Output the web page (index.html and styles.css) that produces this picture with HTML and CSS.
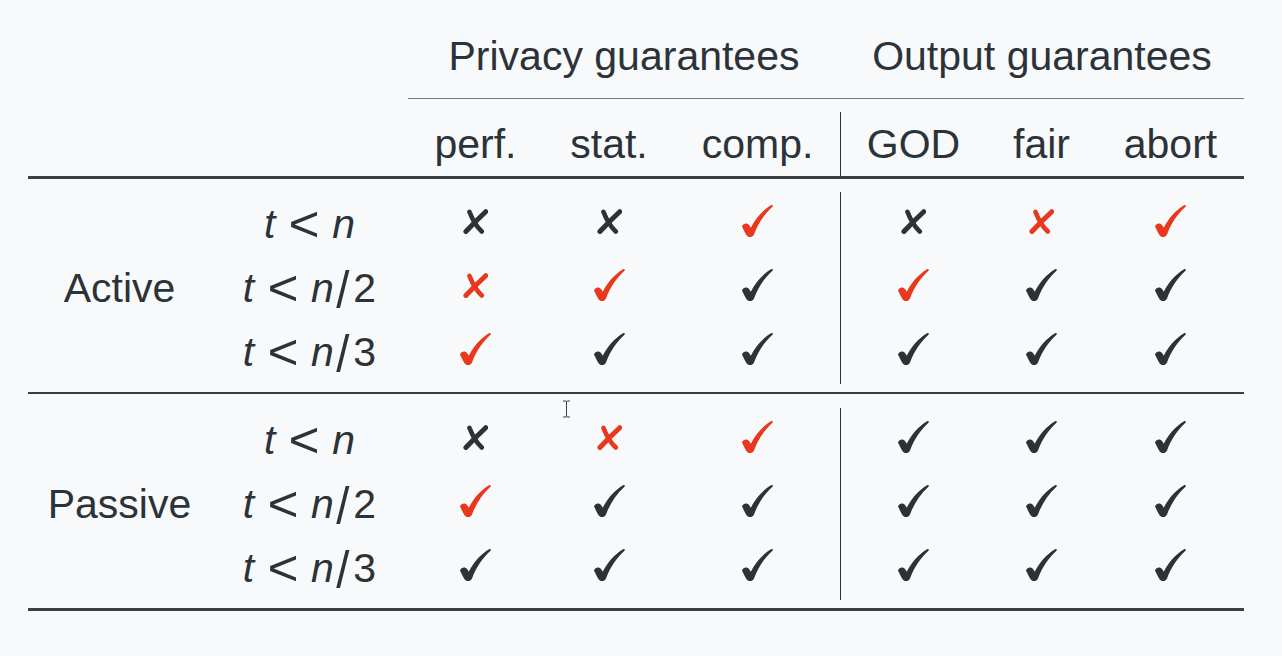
FILE: index.html
```html
<!DOCTYPE html>
<html>
<head>
<meta charset="utf-8">
<link rel="stylesheet" href="styles.css">
</head>
<body>
<svg class="defs" width="0" height="0" aria-hidden="true">
  <defs>
    <symbol id="chk" viewBox="0 0 30 31">
      <path d="M0,20.5 C1.5,17.5 5,17 7,19.5 L8.5,22 C13,13 20,5 28.5,0 C29.5,-0.3 30.3,0.8 29.5,1.6 C22,8.5 16,17 12,27.5 C11,30.5 8.5,31.5 6.5,31 C5,30.6 4,29 3,27 C2,25 0.8,22.5 0,20.5 Z" fill="currentColor"/>
    </symbol>
    <symbol id="crs" viewBox="0 0 24 24">
      <path d="M21.8,2.6 C16,8 8,16 2.8,21.6" fill="none" stroke="currentColor" stroke-width="4.8" stroke-linecap="round"/>
      <path d="M6.2,2.8 C9,10 13,17 18,21.6" fill="none" stroke="currentColor" stroke-width="4.4" stroke-linecap="round"/>
    </symbol>
  </defs>
</svg>
<div class="slide">
  <div class="tbl">
    <div class="grid head1">
      <div class="grp priv">Privacy guarantees</div>
      <div class="grp out">Output guarantees</div>
    </div>
    <div class="cmid"></div>
    <div class="grid head2">
      <div class="cell"></div>
      <div class="cell"></div>
      <div class="cell">perf.</div>
      <div class="cell">stat.</div>
      <div class="cell">comp.</div>
      <div class="cell vsep">GOD</div>
      <div class="cell">fair</div>
      <div class="cell">abort</div>
    </div>
    <div class="rule heavy"></div>

    <div class="grid block">
      <div class="cell"></div>
      <div class="cell m"><i>t</i><span class="lt">&lt;</span><i>n</i></div>
      <div class="cell ic"><svg class="x"><use href="#crs"/></svg></div>
      <div class="cell ic"><svg class="x"><use href="#crs"/></svg></div>
      <div class="cell ic red"><svg class="c"><use href="#chk"/></svg></div>
      <div class="cell ic vsep"><svg class="x"><use href="#crs"/></svg></div>
      <div class="cell ic red"><svg class="x"><use href="#crs"/></svg></div>
      <div class="cell ic red"><svg class="c"><use href="#chk"/></svg></div>

      <div class="cell">Active</div>
      <div class="cell m"><i>t</i><span class="lt">&lt;</span><i>n</i><span class="sl">/</span>2</div>
      <div class="cell ic red"><svg class="x"><use href="#crs"/></svg></div>
      <div class="cell ic red"><svg class="c"><use href="#chk"/></svg></div>
      <div class="cell ic"><svg class="c"><use href="#chk"/></svg></div>
      <div class="cell ic vsep red"><svg class="c"><use href="#chk"/></svg></div>
      <div class="cell ic"><svg class="c"><use href="#chk"/></svg></div>
      <div class="cell ic"><svg class="c"><use href="#chk"/></svg></div>

      <div class="cell"></div>
      <div class="cell m"><i>t</i><span class="lt">&lt;</span><i>n</i><span class="sl">/</span>3</div>
      <div class="cell ic red"><svg class="c"><use href="#chk"/></svg></div>
      <div class="cell ic"><svg class="c"><use href="#chk"/></svg></div>
      <div class="cell ic"><svg class="c"><use href="#chk"/></svg></div>
      <div class="cell ic vsep"><svg class="c"><use href="#chk"/></svg></div>
      <div class="cell ic"><svg class="c"><use href="#chk"/></svg></div>
      <div class="cell ic"><svg class="c"><use href="#chk"/></svg></div>
    </div>

    <div class="rule light"></div>

    <div class="grid block second">
      <div class="cell"></div>
      <div class="cell m"><i>t</i><span class="lt">&lt;</span><i>n</i></div>
      <div class="cell ic"><svg class="x"><use href="#crs"/></svg></div>
      <div class="cell ic red"><svg class="x"><use href="#crs"/></svg></div>
      <div class="cell ic red"><svg class="c"><use href="#chk"/></svg></div>
      <div class="cell ic vsep"><svg class="c"><use href="#chk"/></svg></div>
      <div class="cell ic"><svg class="c"><use href="#chk"/></svg></div>
      <div class="cell ic"><svg class="c"><use href="#chk"/></svg></div>

      <div class="cell">Passive</div>
      <div class="cell m"><i>t</i><span class="lt">&lt;</span><i>n</i><span class="sl">/</span>2</div>
      <div class="cell ic red"><svg class="c"><use href="#chk"/></svg></div>
      <div class="cell ic"><svg class="c"><use href="#chk"/></svg></div>
      <div class="cell ic"><svg class="c"><use href="#chk"/></svg></div>
      <div class="cell ic vsep"><svg class="c"><use href="#chk"/></svg></div>
      <div class="cell ic"><svg class="c"><use href="#chk"/></svg></div>
      <div class="cell ic"><svg class="c"><use href="#chk"/></svg></div>

      <div class="cell"></div>
      <div class="cell m"><i>t</i><span class="lt">&lt;</span><i>n</i><span class="sl">/</span>3</div>
      <div class="cell ic"><svg class="c"><use href="#chk"/></svg></div>
      <div class="cell ic"><svg class="c"><use href="#chk"/></svg></div>
      <div class="cell ic"><svg class="c"><use href="#chk"/></svg></div>
      <div class="cell ic vsep"><svg class="c"><use href="#chk"/></svg></div>
      <div class="cell ic"><svg class="c"><use href="#chk"/></svg></div>
      <div class="cell ic"><svg class="c"><use href="#chk"/></svg></div>
    </div>

    <div class="rule heavy"></div>
  </div>

  <svg class="cursor" width="9" height="18" viewBox="0 0 9 18" aria-hidden="true">
    <path d="M1,1 H3.5 M5.5,1 H8 M4.5,1.5 V16.5 M1,17 H3.5 M5.5,17 H8 M3.5,1 Q4.5,1 4.5,2 Q4.5,1 5.5,1 M3.5,17 Q4.5,17 4.5,16 Q4.5,17 5.5,17" fill="none" stroke="#3a3f44" stroke-width="1"/>
  </svg>
</div>
</body>
</html>
```

FILE: styles.css
```css
html, body {
  margin: 0;
  padding: 0;
  background: #f8f9fa;
}

body {
  font-family: "Liberation Sans", Arial, sans-serif;
  font-size: 41px;
  color: #2c3338;
}

.defs {
  position: absolute;
  width: 0;
  height: 0;
  overflow: hidden;
}

.slide {
  position: relative;
  width: 1282px;
  height: 656px;
  overflow: hidden;
}

.tbl {
  width: 1216px;
  margin-left: 28px;
  padding-top: 24px;
}

.grid {
  display: grid;
  grid-template-columns: 183px 197px 135px 132px 165px 146px 111px 147px;
}

.grp {
  height: 64px;
  line-height: 64px;
  text-align: center;
  white-space: nowrap;
}

.priv { grid-column: 3 / 6; }
.out { grid-column: 6 / 9; }

.cmid {
  margin: 10px 0 0 380px;
  height: 1px;
  background: #72777b;
}

.head2 { margin-top: 13px; }

.cell {
  height: 64px;
  line-height: 64px;
  text-align: center;
  white-space: nowrap;
  box-sizing: border-box;
}

.vsep { border-left: 1.5px solid #2c3338; }

.rule { background: #3a3f44; }
.rule.heavy { height: 3px; }
.rule.light { height: 2px; }

.block { margin: 13px 0 8px; }
.block.second { margin-top: 14px; }

.m i { font-style: italic; }

.lt {
  display: inline-block;
  margin: 0 0.4em;
  transform: scale(1.3, 1.22);
}

.sl {
  display: inline-block;
  margin: 0 0.12em 0 0.08em;
  transform: scale(1.15, 1.25) translateY(2px);
}

.ic {
  display: flex;
  align-items: center;
  justify-content: center;
  padding-bottom: 6px;
  color: #2c3338;
}

.ic.red { color: #e8381f; }

.ic svg.c { width: 31px; height: 32px; }
.ic svg.x { width: 25px; height: 25px; }

.cursor {
  position: absolute;
  left: 562px;
  top: 400px;
}
```
